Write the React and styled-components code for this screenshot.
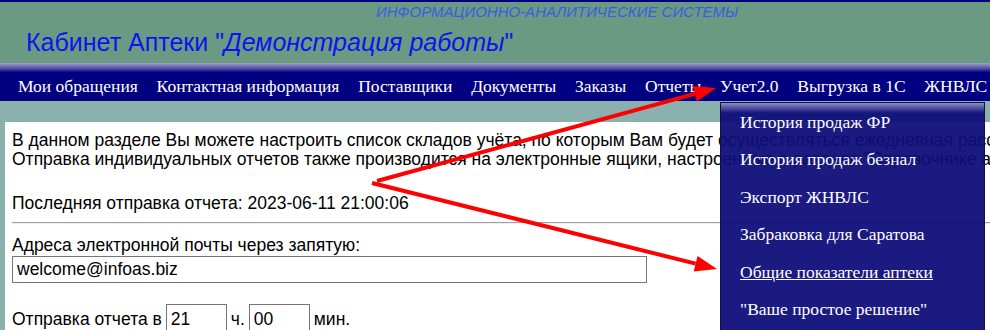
import React from "react"
import styled, { createGlobalStyle } from "styled-components"

const GlobalStyle = createGlobalStyle`
  html, body {
    margin: 0;
    padding: 0;
    overflow: hidden;
    background: #8bb1af;
  }
`

const navItems = [
  "Мои обращения",
  "Контактная информация",
  "Поставщики",
  "Документы",
  "Заказы",
  "Отчеты",
  "Учет2.0",
  "Выгрузка в 1С",
  "ЖНВЛС",
]

const menuItems = [
  { label: "История продаж ФР" },
  { label: "История продаж безнал" },
  { label: "Экспорт ЖНВЛС" },
  { label: "Забраковка для Саратова" },
  { label: "Общие показатели аптеки", active: true },
  { label: "\"Ваше простое решение\"" },
]

const Arrow = ({ x1, y1, x2, y2 }) => {
  const dx = x2 - x1
  const dy = y2 - y1
  const len = Math.sqrt(dx * dx + dy * dy)
  const ux = dx / len
  const uy = dy / len
  const bx = x2 - ux * 22
  const by = y2 - uy * 22
  const px = -uy * 8
  const py = ux * 8
  return (
    <g>
      <line x1={x1} y1={y1} x2={bx} y2={by} stroke="#ff0000" strokeWidth="4" />
      <polygon
        points={`${x2},${y2} ${bx + px},${by + py} ${bx - px},${by - py}`}
        fill="#ff0000"
      />
    </g>
  )
}

const App = () => {
  return (
    <Page>
      <GlobalStyle />
      <Header>
        <Tagline>ИНФОРМАЦИОННО-АНАЛИТИЧЕСКИЕ СИСТЕМЫ</Tagline>
        <Title>
          Кабинет Аптеки "<em>Демонстрация работы</em>"
        </Title>
      </Header>
      <NavShade />
      <Nav>
        {navItems.map(item => (
          <NavItem key={item}>{item}</NavItem>
        ))}
      </Nav>
      <Content>
        <Intro>
          В данном разделе Вы можете настроить список складов учёта, по которым Вам будет осуществляться ежедневная рассылка отчетов.
          <br />
          Отправка индивидуальных отчетов также производится на электронные ящики, настроенные в разделе "Справочнике аптеки".
        </Intro>
        <LastSent>Последняя отправка отчета: 2023-06-11 21:00:06</LastSent>
        <Rule />
        <Label>Адреса электронной почты через запятую:</Label>
        <EmailInput defaultValue="welcome@infoas.biz" />
        <TimeRow>
          Отправка отчета в <TimeInput defaultValue="21" /> ч. <TimeInput defaultValue="00" />мин.
        </TimeRow>
      </Content>

      <Dropdown>
        {menuItems.map(item => (
          <MenuItem key={item.label} active={item.active}>
            {item.label}
          </MenuItem>
        ))}
      </Dropdown>

      <Arrows width="990" height="330" viewBox="0 0 990 330">
        <Arrow x1={377} y1={181} x2={716} y2={88} />
        <Arrow x1={372} y1={183} x2={717} y2={269} />
      </Arrows>
    </Page>
  )
}

export default App

const Page = styled.div`
  position: relative;
  width: 990px;
  height: 330px;
  overflow: hidden;
  background: #8bb1af;
`

const Header = styled.div`
  height: 61px;
  border-top: 2px solid #000080;
  background: #6a9a81;
  display: flex;
  flex-direction: column;
`

const Tagline = styled.div`
  font-family: "Liberation Sans", Arial, sans-serif;
  font-style: italic;
  font-size: 15px;
  line-height: 16px;
  color: #3c5ae6;
  padding-left: 376px;
  margin-top: 2px;
`

const Title = styled.h1`
  margin: 8px 0 0 26px;
  font-family: "Liberation Sans", Arial, sans-serif;
  font-weight: normal;
  font-size: 25px;
  line-height: 29px;
  color: #0a14f0;

  em {
    font-style: italic;
  }
`

const NavShade = styled.div`
  height: 9px;
  background: linear-gradient(#a3a1cf, #5450a8 60%, #0c0a86);
`

const Nav = styled.nav`
  height: 29px;
  background: #000080;
  display: flex;
  align-items: center;
  padding-left: 8.6px;
  white-space: nowrap;
`

const NavItem = styled.span`
  font-family: "Liberation Serif", "Times New Roman", serif;
  font-size: 17.5px;
  color: #ffffff;
  padding: 0 9.4px;
`

const Content = styled.div`
  margin: 21px 0 0 5px;
  background: #ffffff;
  padding: 9px 7px 0;
  width: 1500px;
  height: 300px;
  font-family: "Liberation Sans", Arial, sans-serif;
  font-size: 17.5px;
  line-height: 19px;
  color: #000000;
`

const Intro = styled.div`
  white-space: nowrap;
`

const LastSent = styled.div`
  margin-top: 25px;
`

const Rule = styled.div`
  margin: 9px 0 0;
  border-top: 1px solid #a0a0a0;
  border-bottom: 1px solid #eeeeee;
`

const Label = styled.div`
  margin-top: 12px;
`

const EmailInput = styled.input`
  display: block;
  box-sizing: border-box;
  width: 635px;
  height: 27px;
  margin: 1px 0 0;
  padding: 0 4px;
  border: 1px solid #767676;
  font-family: "Liberation Sans", Arial, sans-serif;
  font-size: 17.5px;
  color: #000;
`

const TimeRow = styled.div`
  margin-top: 21px;
  display: flex;
  align-items: center;
  gap: 4px;
`

const TimeInput = styled.input`
  box-sizing: border-box;
  width: 61px;
  height: 30px;
  padding: 0 4px;
  border: 1px solid #767676;
  font-family: "Liberation Sans", Arial, sans-serif;
  font-size: 17.5px;
  color: #000;
`

const Dropdown = styled.div`
  position: absolute;
  left: 720px;
  top: 102px;
  width: 263px;
  height: 240px;
  border: 1px solid #101040;
  background: linear-gradient(
    rgba(140, 138, 200, 0.96),
    rgba(14, 14, 122, 0.95) 10px
  );
  padding-top: 1px;
`

const MenuItem = styled.div`
  font-family: "Liberation Serif", "Times New Roman", serif;
  font-size: 17.5px;
  line-height: 37.4px;
  height: 37.4px;
  padding-left: 19px;
  color: #ffffff;
  text-decoration: ${({ active }) => (active ? "underline" : "none")};
  white-space: nowrap;
`

const Arrows = styled.svg`
  position: absolute;
  left: 0;
  top: 0;
  pointer-events: none;
`
